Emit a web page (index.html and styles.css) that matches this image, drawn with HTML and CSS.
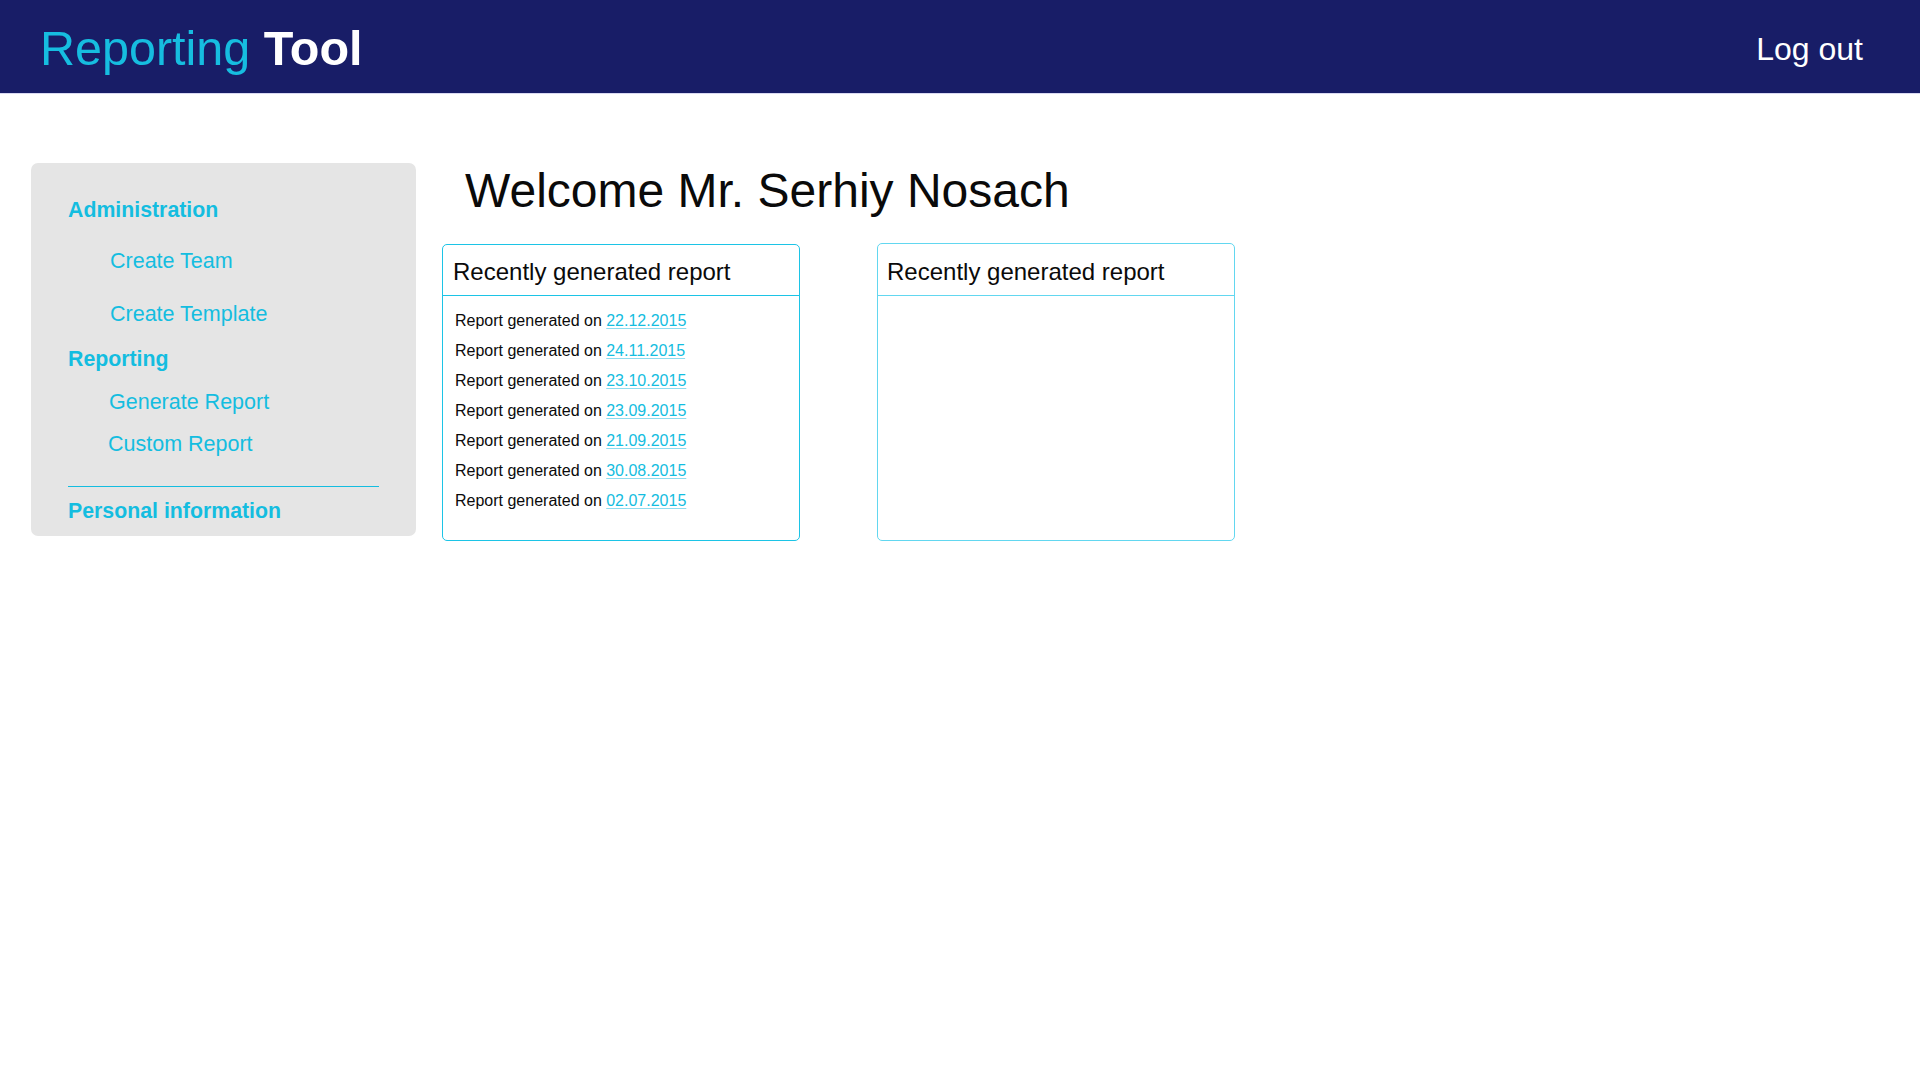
FILE: index.html
```html
<!DOCTYPE html>
<html lang="en">
<head>
<meta charset="utf-8">
<title>Reporting Tool</title>
<link rel="stylesheet" href="styles.css">
</head>
<body>
<header class="topbar">
  <div class="logo"><span class="logo-light">Reporting</span> <span class="logo-bold">Tool</span></div>
  <a class="logout" href="#">Log out</a>
</header>
<main class="main">
  <nav class="sidebar">
    <a class="nav-section nav-admin" href="#">Administration</a>
    <a class="nav-item nav-team" href="#">Create Team</a>
    <a class="nav-item nav-template" href="#">Create Template</a>
    <a class="nav-section nav-reporting" href="#">Reporting</a>
    <a class="nav-item nav-generate" href="#">Generate Report</a>
    <a class="nav-item nav-custom" href="#">Custom Report</a>
    <hr class="nav-divider">
    <a class="nav-section nav-personal" href="#">Personal information</a>
  </nav>
  <section class="content">
    <h1 class="welcome">Welcome Mr. Serhiy Nosach</h1>
    <div class="cards">
      <div class="card card-primary">
        <div class="card-header">Recently generated report</div>
        <ul class="card-list">
          <li>Report generated on <a href="#">22.12.2015</a></li>
          <li>Report generated on <a href="#">24.11.2015</a></li>
          <li>Report generated on <a href="#">23.10.2015</a></li>
          <li>Report generated on <a href="#">23.09.2015</a></li>
          <li>Report generated on <a href="#">21.09.2015</a></li>
          <li>Report generated on <a href="#">30.08.2015</a></li>
          <li>Report generated on <a href="#">02.07.2015</a></li>
        </ul>
      </div>
      <div class="card card-secondary">
        <div class="card-header">Recently generated report</div>
        <div class="card-body"></div>
      </div>
    </div>
  </section>
</main>
</body>
</html>
```

FILE: styles.css
```css
* { box-sizing: border-box; }
html, body {
  margin: 0;
  padding: 0;
  background: #ffffff;
  font-family: "Liberation Sans", Arial, sans-serif;
  color: #111111;
}
a { text-decoration: none; }

.topbar {
  height: 94px;
  background: #181d67;
  border-bottom: 1px solid #d9d9f2;
  display: flex;
  align-items: center;
  justify-content: space-between;
  padding: 0 57px 0 40px;
}
.logo {
  font-size: 48.5px;
  line-height: 1;
  white-space: nowrap;
  padding-top: 4px;
}
.logo-light { color: #16bde0; }
.logo-bold { color: #ffffff; font-weight: bold; }
.logout {
  color: #ffffff;
  font-size: 32px;
  line-height: 1;
  padding-top: 5px;
}

.main {
  display: flex;
  align-items: flex-start;
  padding: 69px 0 0 31px;
}

.sidebar {
  width: 385px;
  background: #e5e5e5;
  border-radius: 7px;
  padding: 35px 37px 13px 37px;
  display: flex;
  flex-direction: column;
}
.nav-section, .nav-item {
  display: block;
  line-height: 24px;
  color: #14bde0;
  white-space: nowrap;
}
.nav-section { font-weight: bold; font-size: 21.3px; }
.nav-item { font-size: 21.5px; }
.nav-admin { margin-bottom: 27px; }
.nav-team { padding-left: 42px; margin-bottom: 29px; }
.nav-template { padding-left: 42px; margin-bottom: 21px; }
.nav-reporting { margin-bottom: 19px; }
.nav-generate { padding-left: 41px; margin-bottom: 18px; }
.nav-custom { padding-left: 40px; }
.nav-divider {
  border: 0;
  height: 1px;
  background: #14bde0;
  margin: 30px 0 12px 0;
  width: 100%;
}

.content {
  margin-left: 26px;
  display: flex;
  flex-direction: column;
}
.welcome {
  margin: 0 0 25px 0;
  padding-left: 23px;
  font-size: 48px;
  line-height: 56px;
  font-weight: normal;
  color: #0a0a0a;
  white-space: nowrap;
}

.cards {
  display: flex;
  gap: 77px;
  align-items: stretch;
}
.card {
  width: 358px;
  height: 297px;
  border: 1px solid #1cc4e6;
  border-radius: 5px;
  display: flex;
  flex-direction: column;
}
.card-secondary {
  border-color: #62d7f0;
  margin-top: -1px;
  height: 298px;
}
.card-header {
  font-size: 24px;
  line-height: 30px;
  padding: 12px 10px 8px 10px;
  border-bottom: 1px solid #1cc4e6;
  color: #0a0a0a;
  white-space: nowrap;
}
.card-secondary .card-header {
  border-bottom-color: #62d7f0;
  padding-left: 9px;
  padding-top: 13px;
}
.card-list {
  list-style: none;
  margin: 0;
  padding: 10px 12px 0 12px;
}
.card-list li {
  font-size: 16px;
  line-height: 30px;
  color: #0a0a0a;
  white-space: nowrap;
}
.card-list a {
  color: #14bde0;
  text-decoration: underline;
  text-decoration-color: #8fdcef;
  text-underline-offset: 2px;
}
```
